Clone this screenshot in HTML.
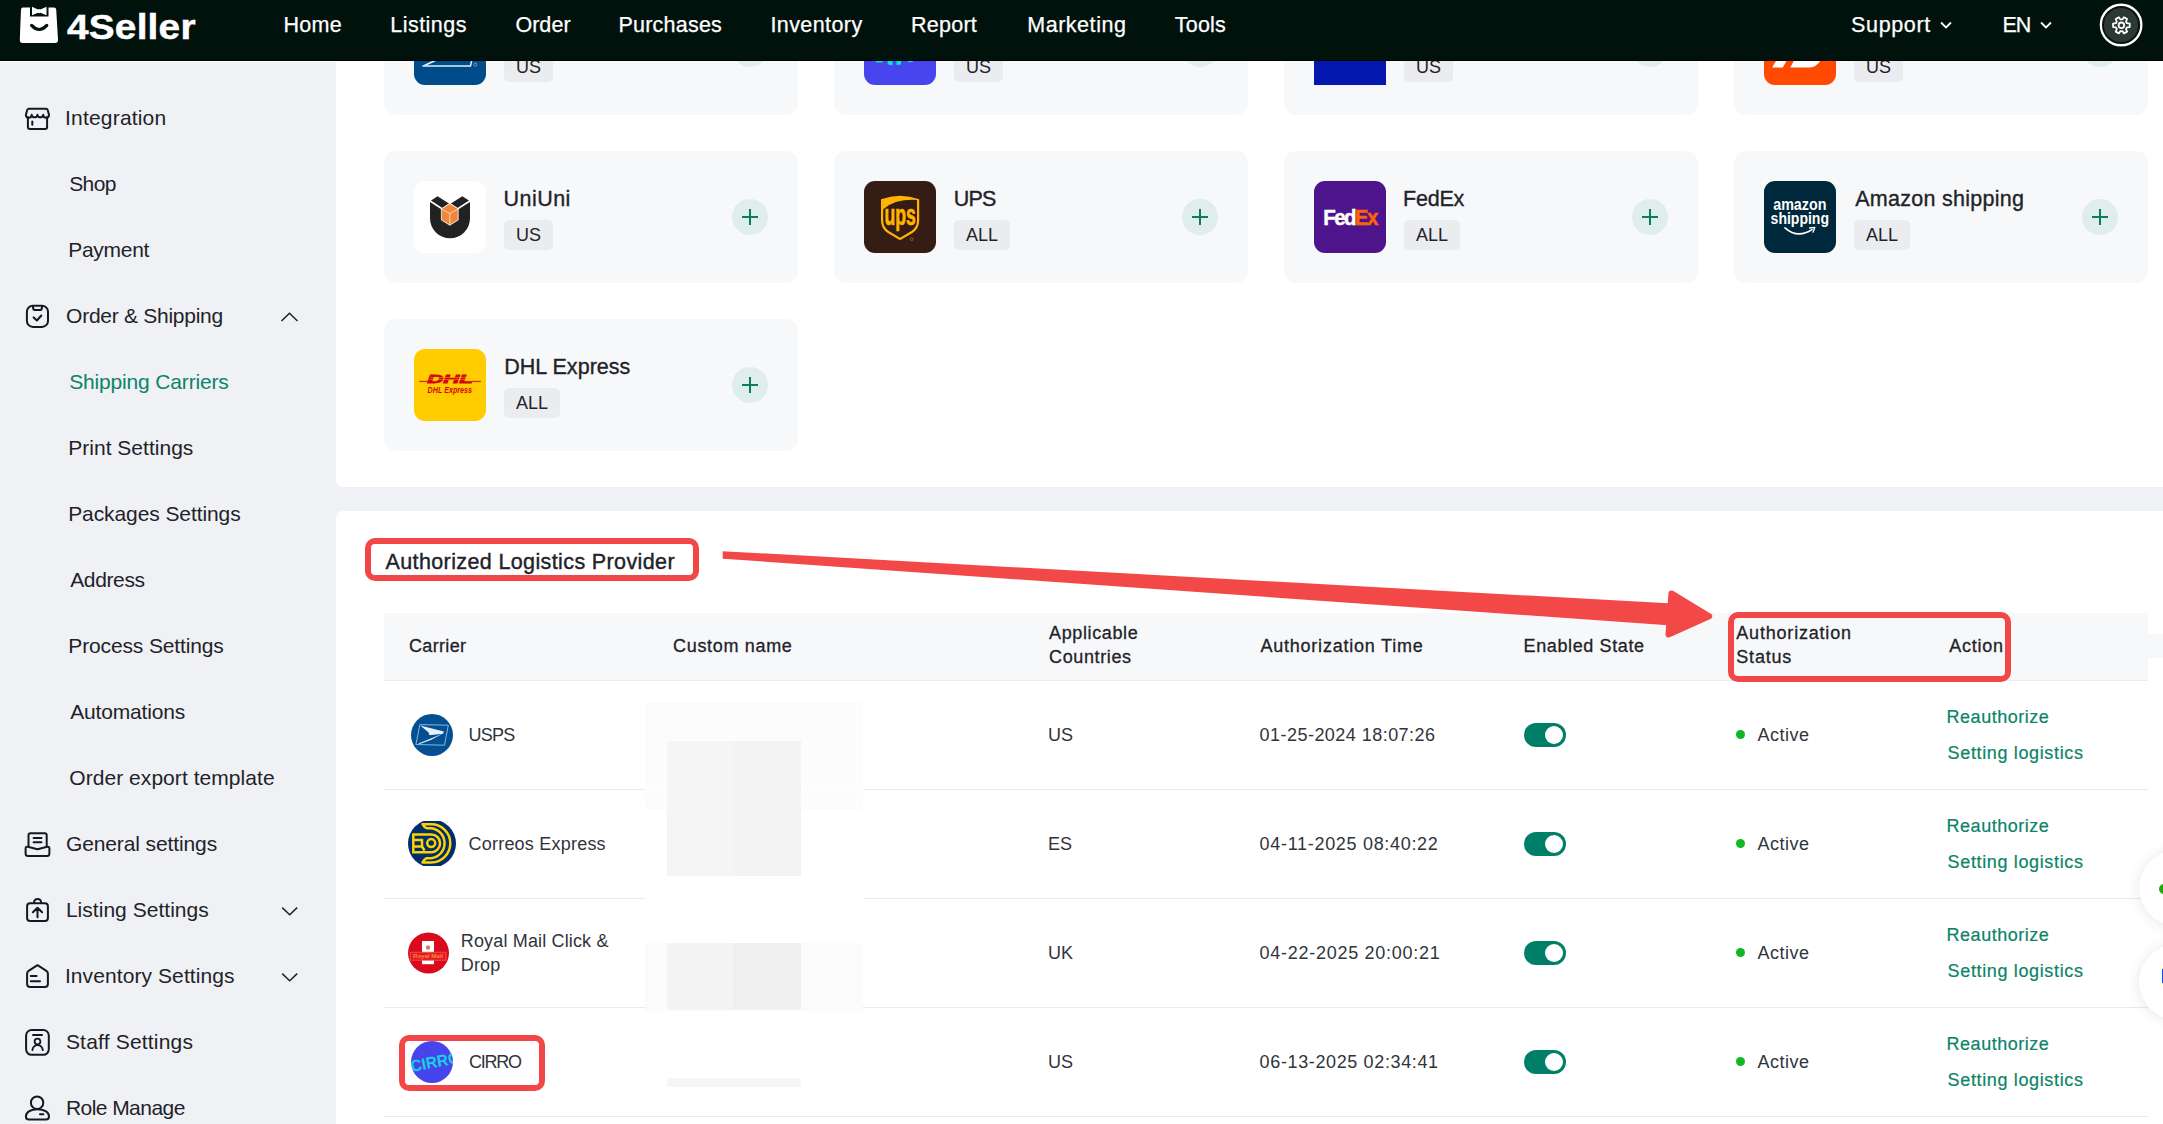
<!DOCTYPE html>
<html>
<head>
<meta charset="utf-8">
<style>
*{box-sizing:border-box;margin:0;padding:0}
html,body{width:2163px;height:1124px;overflow:hidden;background:#f0f1f5;font-family:"Liberation Sans",sans-serif;color:#1f2329}
.abs{position:absolute}
#topbar{position:absolute;left:0;top:0;width:2163px;height:61px;background:#01120d;z-index:20}
#topbar .nav{position:absolute;top:0.9px;height:49px;line-height:49px;color:#fff;font-size:21.5px;-webkit-text-stroke:0.25px #fff;white-space:nowrap}
#sidebar{position:absolute;left:0;top:61px;width:336px;height:1063px;background:#f0f1f5}
.sb{position:absolute;white-space:nowrap;font-size:21px;color:#1f2329;height:30px;line-height:30px}
.sb.sub{left:69px}
.sb.top{left:66px}
.sb.act{color:#0b8468}
.sbi{position:absolute;left:24px;width:28px;height:28px}
#panel1{position:absolute;left:336px;top:61px;width:1827px;height:426px;background:#fff;border-bottom-left-radius:7px}
#panel2{position:absolute;left:336px;top:511px;width:1827px;height:613px;background:#fff;border-top-left-radius:7px}
.card{position:absolute;width:414px;height:132px;background:#f7f8fa;border-radius:12px}
.card .logo{position:absolute;left:30px;top:30px;width:72px;height:72px;border-radius:11px;overflow:hidden}
.card .nm{position:absolute;left:120px;top:33px;font-size:21.5px;line-height:30px;color:#1f2329;white-space:nowrap;-webkit-text-stroke:0.35px #1f2329}
.card .bd{position:absolute;left:120px;top:69px;height:30px;line-height:30px;padding:0 12px;background:#ebecf0;border-radius:5px;font-size:18px;color:#1f2329;white-space:nowrap}
.card .plus{position:absolute;left:348px;top:48px;width:36px;height:36px;border-radius:50%;background:#e0eeeb}
.card .plus:before{content:"";position:absolute;left:10px;top:17px;width:16px;height:2px;background:#0a7c5f}
.card .plus:after{content:"";position:absolute;left:17px;top:10px;width:2px;height:16px;background:#0a7c5f}
#thead{position:absolute;left:384px;top:613px;width:1764px;height:68px;background:#f7f8fa;border-bottom:1px solid #e8eaf1}
.th{position:absolute;margin-top:-0.6px;font-size:18px;line-height:24px;color:#1f2329;white-space:nowrap;-webkit-text-stroke:0.3px #1f2329}
.row{position:absolute;left:384px;width:1764px;height:109px;border-bottom:1px solid #e8eaf1}
.td{position:absolute;font-size:18px;line-height:24px;color:#30343b;white-space:nowrap}
.lnk{position:absolute;left:1564px;font-size:18px;line-height:24px;color:#0b8468;white-space:nowrap;-webkit-text-stroke:0.2px #0b8468}
.tog{position:absolute;left:1140px;top:42px;width:42px;height:24px;border-radius:12px;background:#007f68}
.tog:after{content:"";position:absolute;left:21px;top:3px;width:18px;height:18px;border-radius:50%;background:#fff}
.dot{position:absolute;left:1352px;top:49px;width:9px;height:9px;border-radius:50%;background:#10b827}
.av{position:absolute;width:44px;height:44px;border-radius:50%;overflow:hidden}
.redbox{position:absolute;border:6px solid #f34747;border-radius:10px}
</style>
</head>
<body>
<div id="sidebar">
<div class="abs" style="left:0;top:0;width:336px;height:1px;background:#fff"></div>
<div class="sb top" style="top:42px;letter-spacing:0.18px;margin-left:-0.9px">Integration</div>
<div class="sb sub" style="top:108px;letter-spacing:-0.58px;margin-left:0.2px">Shop</div>
<div class="sb sub" style="top:174px;letter-spacing:-0.28px;margin-left:-0.8px">Payment</div>
<div class="sb top" style="top:240px;letter-spacing:-0.27px;margin-left:0.1px">Order &amp; Shipping</div>
<div class="sb sub act" style="top:306px;letter-spacing:-0.16px;margin-left:0.2px">Shipping Carriers</div>
<div class="sb sub" style="top:372px;letter-spacing:0.02px;margin-left:-0.8px">Print Settings</div>
<div class="sb sub" style="top:438px;letter-spacing:-0.09px;margin-left:-0.8px">Packages Settings</div>
<div class="sb sub" style="top:504px;letter-spacing:-0.36px;margin-left:1.2px">Address</div>
<div class="sb sub" style="top:570px;letter-spacing:-0.14px;margin-left:-0.7px">Process Settings</div>
<div class="sb sub" style="top:636px;letter-spacing:-0.19px;margin-left:1.3px">Automations</div>
<div class="sb sub" style="top:702px;letter-spacing:0.05px;margin-left:0.3px">Order export template</div>
<div class="sb top" style="top:768px;letter-spacing:-0.11px;margin-left:-0.1px">General settings</div>
<div class="sb top" style="top:834px;letter-spacing:0.03px;margin-left:-0.1px">Listing Settings</div>
<div class="sb top" style="top:900px;letter-spacing:0.09px;margin-left:-1.1px">Inventory Settings</div>
<div class="sb top" style="top:966px;letter-spacing:0.19px;margin-left:-0.1px">Staff Settings</div>
<div class="sb top" style="top:1032px;letter-spacing:-0.55px;margin-left:-0.1px">Role Manage</div>
<svg class="abs" style="left:0;top:-61px" width="336" height="1124" viewBox="0 0 336 1124" fill="none" stroke="#141820" stroke-width="2" stroke-linecap="round" stroke-linejoin="round">
<!-- integration -->
<path d="M28.8 108.7 H46.2 Q47.3 108.7 47.6 109.8 L49 114.8 A2.9 2.9 0 0 1 43.2 114.8 A2.9 2.9 0 0 1 37.45 114.8 A2.9 2.9 0 0 1 31.7 114.8 A2.9 2.9 0 0 1 25.9 114.8 L27.3 109.8 Q27.6 108.7 28.8 108.7 Z"/>
<path d="M27.9 117.2 V126.9 Q27.9 128.9 29.9 128.9 H45.1 Q47.1 128.9 47.1 126.9 V117.2"/>
<path d="M32.3 121.6 V124.7"/>
<!-- order & shipping -->
<rect x="26.9" y="305.8" width="21.1" height="21.1" rx="6"/>
<path d="M33 306 V307.4 Q33 310.1 35.7 310.1 H39.3 Q42 310.1 42 307.4 V306"/>
<path d="M33.6 317.4 L36.9 320.5 L41.3 315.5"/>
<!-- general settings -->
<path d="M28.5 846.2 V835.2 Q28.5 833.2 30.5 833.2 H44.7 Q46.7 833.2 46.7 835.2 V846.2"/>
<path d="M33.6 837.9 H41.5 M33.6 842.3 H41.5"/>
<path d="M25.6 848.6 Q25.6 846.3 27.8 846.8 L37.5 849.2 L47.2 846.8 Q49.4 846.3 49.4 848.6 V853.4 Q49.4 855.9 46.9 855.9 H28.1 Q25.6 855.9 25.6 853.4 Z"/>
<!-- listing settings -->
<rect x="27.1" y="903.2" width="20.8" height="17.8" rx="3"/>
<path d="M34 903 V902.5 A3.6 3.6 0 0 1 41.2 902.5 V903"/>
<path d="M37.5 917.2 V908 M32.9 912.2 L37.5 907.7 L42.1 912.2"/>
<!-- inventory settings -->
<path d="M37.5 965.2 L46.4 970.9 Q47.9 971.9 47.9 973.7 V984.1 Q47.9 987.1 44.9 987.1 H30.1 Q27.1 987.1 27.1 984.1 V973.7 Q27.1 971.9 28.6 970.9 Z"/>
<path d="M30.8 976 H36.6 M30.8 981.3 H40"/>
<!-- staff settings -->
<rect x="26.1" y="1030" width="22.7" height="24.8" rx="5.5"/>
<path d="M33 1034.9 H42" />
<circle cx="37.5" cy="1041.6" r="2.9" stroke-width="1.8"/>
<path d="M32.4 1050.2 A5.2 5.2 0 0 1 42.8 1050.2" stroke-width="1.8"/>
<!-- role manage -->
<circle cx="37.1" cy="1102.7" r="6.2"/>
<path d="M25.9 1116.4 C25.9 1112 31 1109.2 37.4 1109.2 C43.9 1109.2 49 1112 49 1116.4 Q49 1119.4 46 1119.4 H28.9 Q25.9 1119.4 25.9 1116.4 Z"/>
<path d="M40 1114.3 H43.4"/>
<!-- chevrons -->
<g stroke-width="1.5" stroke="#1f2329" stroke-linecap="butt" stroke-linejoin="miter">
<path d="M281.5 321 L289.5 313.3 L297.5 321"/>
<path d="M282.2 907.6 L289.7 914.8 L297.2 907.6"/>
<path d="M282.2 973.6 L289.7 980.8 L297.2 973.6"/>
</g>
</svg>
</div>
<div id="panel1"></div>
<div id="panel2"></div>
<!--CARDS-->
<div class="card" style="left:384px;top:-17px"><div class="logo" id="lg-usps1"><svg width="72" height="72" viewBox="0 0 72 72"><rect width="72" height="72" fill="#004b8a"/>
<path d="M8.4 53 L56.5 53 L58 46" fill="none" stroke="#dff0f7" stroke-width="1.5"/><path d="M8.6 52.6 L24.5 45 L28.5 45 L12.5 52.6 Z" fill="#e9f5fa"/>
<circle cx="61.4" cy="51.5" r="1.6" fill="none" stroke="#cfe3ee" stroke-width="0.5"/>
</svg></div><div class="nm"></div><div class="bd">US</div><div class="plus"></div></div>
<div class="card" style="left:834px;top:-17px"><div class="logo" id="lg-cirro1"><svg width="72" height="72" viewBox="0 0 72 72"><rect width="72" height="72" fill="#4845ee"/>
<path d="M11.5 48 h7.5 v1 q-3.7 1.2 -7.5 0 Z M23.7 48 h4.8 v4.2 l-4.8 -0.6 Z M32.5 48 h4.6 v3.6 l-4.6 0.5 Z M43.6 48 h5.4 v0.8 q-2.7 0.8 -5.4 0 Z" fill="#00e8c8"/>
</svg></div><div class="nm"></div><div class="bd">US</div><div class="plus"></div></div>
<div class="card" style="left:1284px;top:-17px"><div class="logo" id="lg-blue1" style="border-radius:0"><svg width="72" height="72" viewBox="0 0 72 72"><rect width="72" height="72" fill="#0418b0"/></svg></div><div class="nm"></div><div class="bd">US</div><div class="plus"></div></div>
<div class="card" style="left:1734px;top:-17px"><div class="logo" id="lg-orange1"><svg width="72" height="72" viewBox="0 0 72 72"><rect width="72" height="72" fill="#ff4a00"/>
<path d="M8.2 54.5 L18.8 54.5 L23 47 L12.5 47 Z" fill="#fff"/>
<path d="M26.2 54.5 L46 54.5 Q52 54.5 57 47 L30.4 47 Z" fill="#fff"/>
</svg></div><div class="nm"></div><div class="bd">US</div><div class="plus"></div></div>
<div class="card" style="left:384px;top:151px"><div class="logo" id="lg-uniuni"><svg width="72" height="72" viewBox="0 0 72 72"><rect width="72" height="72" fill="#fff"/>
<path d="M16 21 L16 37.3 A20 20 0 0 0 56 37.3 L56 21 L44 28.5 L35.8 33 L27.6 28.5 Z" fill="#222"/>
<path d="M17 19.5 L23.6 15.2 L35 22.6 L28.4 27 Z" fill="#222"/>
<path d="M55 19.5 L48.3 15.2 L36.9 22.6 L43.4 27 Z" fill="#222"/>
<path d="M35.8 22.6 L44.2 27.8 L44.2 39 L35.8 44.2 L27.4 39 L27.4 27.8 Z" fill="#f0883c" stroke="#fff" stroke-width="0.8" stroke-linejoin="round"/>
<path d="M27.4 27.8 L35.8 32.6 L44.2 27.8 M35.8 32.6 V44.2" fill="none" stroke="#fbe3cf" stroke-width="0.8"/>
</svg></div><div class="nm" style="letter-spacing:0.46px;margin-left:-0.5px">UniUni</div><div class="bd">US</div><div class="plus"></div></div>
<div class="card" style="left:834px;top:151px"><div class="logo" id="lg-ups"><svg width="72" height="72" viewBox="0 0 72 72"><rect width="72" height="72" fill="#351c15"/>
<path d="M17 18.3 Q36 11 55.2 18.3 L55.2 39.5 Q55.2 47.5 48.5 52 L36.1 59.3 L23.7 52 Q17 47.5 17 39.5 Z" fill="#ffb500"/>
<path d="M19.2 28.2 Q31 17.8 53 18.9 L53 39.5 Q53 46.2 47.4 50 L36.1 56.7 L24.8 50 Q19.2 46.2 19.2 39.5 Z" fill="#351c15"/>
<text x="20.4" y="44.3" font-family="Liberation Sans, sans-serif" font-weight="bold" font-size="30" fill="#ffb500" stroke="#ffb500" stroke-width="0.7" textLength="31.4" lengthAdjust="spacingAndGlyphs">ups</text>
<circle cx="47.7" cy="58.2" r="1.4" fill="none" stroke="#c98a10" stroke-width="0.6"/>
</svg></div><div class="nm" style="letter-spacing:-0.9px;margin-left:-0.2px">UPS</div><div class="bd">ALL</div><div class="plus"></div></div>
<div class="card" style="left:1284px;top:151px"><div class="logo" id="lg-fedex"><svg width="72" height="72" viewBox="0 0 72 72"><rect width="72" height="72" fill="#4d148c"/>
<text transform="translate(9.3,43.9) scale(0.9,1)" font-family="Liberation Sans, sans-serif" font-weight="bold" font-size="22.8" fill="#fff" textLength="36.9" lengthAdjust="spacing" stroke="#fff" stroke-width="0.5">Fed</text>
<text transform="translate(40.7,43.9) scale(0.9,1)" font-family="Liberation Sans, sans-serif" font-weight="bold" font-size="22.8" fill="#ff6200" textLength="26.4" lengthAdjust="spacing" stroke="#ff6200" stroke-width="0.5">Ex</text>
</svg></div><div class="nm" style="letter-spacing:-0.25px;margin-left:-0.9px">FedEx</div><div class="bd">ALL</div><div class="plus"></div></div>
<div class="card" style="left:1734px;top:151px"><div class="logo" id="lg-amazon"><svg width="72" height="72" viewBox="0 0 72 72"><rect width="72" height="72" fill="#00283c"/>
<text x="9.2" y="28.5" font-family="Liberation Sans, sans-serif" font-weight="bold" font-size="17.2" fill="#fff" textLength="53.2" lengthAdjust="spacingAndGlyphs">amazon</text>
<text x="6.6" y="43.2" font-family="Liberation Sans, sans-serif" font-weight="bold" font-size="17.2" fill="#fff" textLength="58.4" lengthAdjust="spacingAndGlyphs">shipping</text>
<path d="M21 46.8 Q33.5 58 48 48.6" fill="none" stroke="#fff" stroke-width="1.7" stroke-linecap="round"/>
<path d="M45.6 47 L50.8 46.4 L49 51.2" fill="none" stroke="#fff" stroke-width="1.3" stroke-linecap="round" stroke-linejoin="round"/>
</svg></div><div class="nm" style="letter-spacing:0.28px;margin-left:1.2px">Amazon shipping</div><div class="bd">ALL</div><div class="plus"></div></div>
<div class="card" style="left:384px;top:319px"><div class="logo" id="lg-dhl"><svg width="72" height="72" viewBox="0 0 72 72"><rect width="72" height="72" fill="#ffcc00"/>
<text x="13.2" y="33.8" font-family="Liberation Sans, sans-serif" font-weight="bold" font-style="italic" font-size="11.6" fill="#d40511" stroke="#d40511" stroke-width="0.8" textLength="45.5" lengthAdjust="spacingAndGlyphs">DHL</text>
<rect x="5.2" y="31.8" width="9.5" height="1.3" fill="#d8330c"/><rect x="57.6" y="31.8" width="9.4" height="1.3" fill="#d8330c"/>
<rect x="16" y="28" width="40" height="0.6" fill="#ffcc00" opacity=".7"/><rect x="15" y="30.3" width="42" height="0.6" fill="#ffcc00" opacity=".7"/>
<text x="13.6" y="44.4" font-family="Liberation Sans, sans-serif" font-weight="bold" font-style="italic" font-size="8.6" fill="#d40511" textLength="44.4" lengthAdjust="spacingAndGlyphs">DHL Express</text>
</svg></div><div class="nm" style="letter-spacing:0.03px;margin-left:0.2px">DHL Express</div><div class="bd">ALL</div><div class="plus"></div></div>
<!--TABLE-->
<div id="thead"><div class="th" style="left:24px;top:22px;letter-spacing:0.37px;margin-left:0.9px">Carrier</div><div class="th" style="left:289px;top:22px;letter-spacing:0.67px;margin-left:0.1px">Custom name</div><div class="th" style="left:664px;top:9px;letter-spacing:0.63px;margin-left:1px">Applicable<br>Countries</div><div class="th" style="left:876px;top:22px;letter-spacing:0.78px;margin-left:0.4px">Authorization Time</div><div class="th" style="left:1140px;top:22px;letter-spacing:0.62px;margin-left:-0.5px">Enabled State</div><div class="th" style="left:1352px;top:9px;letter-spacing:0.8px;margin-left:0.3px">Authorization<br>Status</div><div class="th" style="left:1564px;top:22px;letter-spacing:0.78px;margin-left:1.2px">Action</div></div>
<div class="row" style="top:681px"><svg class="abs" style="left:27px;top:33px" width="42" height="42" viewBox="0 0 42 42"><circle cx="21" cy="21" r="21" fill="#044e92"/>
<path d="M8.9 10.6 L37.3 11.2 L33.5 31.2 L4.9 30.5 Z" fill="none" stroke="#8fc4ea" stroke-width="0.9"/>
<path d="M9.2 11.4 L32.8 17.6 L32.2 19.8 L18.6 21.2 L17.4 18.2 Z" fill="#e6f1f8"/>
<path d="M32.6 19.2 L7.3 29.6 L8.2 30.3 L20 26 Z" fill="#d2e6f4"/>
</svg><div class="td" style="left:84px;top:42px;letter-spacing:-0.75px;margin-left:0.4px">USPS</div><div class="td" style="left:664px;top:42px">US</div><div class="td" style="left:876px;top:42px;letter-spacing:0.46px;margin-left:-0.4px">01-25-2024 18:07:26</div><div class="tog"></div><div class="dot"></div><div class="td" style="left:1373px;top:42px;letter-spacing:0.5px;margin-left:0.5px">Active</div><div class="lnk" style="top:24px;letter-spacing:0.5px;margin-left:-1.4px">Reauthorize</div><div class="lnk" style="top:60px;letter-spacing:0.64px;margin-left:-0.4px">Setting logistics</div></div>
<div class="row" style="top:790px"><svg class="abs" style="left:24px;top:31px" width="48" height="45" viewBox="0 1.5 48 45"><circle cx="24" cy="24" r="24" fill="#002e6d"/>
<g fill="none" stroke="#ffd100" stroke-width="2.5">
<circle cx="23.2" cy="23.6" r="4"/>
<path d="M5.3 14.9 H23.2 A8.9 8.9 0 0 1 23.2 32.7 H5.3 Z"/>
<path d="M5.3 20.5 H14 V27 H5.3"/>
<path d="M14 27 L16.5 31"/>
<path d="M14.6 4.7 H23.2 A19.1 19.1 0 0 1 23.2 42.9 H14.6 Q16 40 18.6 38.7 H23.2 A15.1 15.1 0 0 0 23.2 8.7 H18.6 Q16 7.6 14.6 4.7 Z" stroke-linejoin="round"/>
</g></svg><div class="td" style="left:84px;top:42px;letter-spacing:0.22px;margin-left:0.5px">Correos Express</div><div class="td" style="left:664px;top:42px">ES</div><div class="td" style="left:876px;top:42px;letter-spacing:0.69px;margin-left:-0.4px">04-11-2025 08:40:22</div><div class="tog"></div><div class="dot"></div><div class="td" style="left:1373px;top:42px;letter-spacing:0.5px;margin-left:0.5px">Active</div><div class="lnk" style="top:24px;letter-spacing:0.5px;margin-left:-1.4px">Reauthorize</div><div class="lnk" style="top:60px;letter-spacing:0.64px;margin-left:-0.4px">Setting logistics</div></div>
<div class="row" style="top:899px"><svg class="abs" style="left:24px;top:33px" width="42" height="42" viewBox="0 0 42 42"><circle cx="20.5" cy="21" r="20.5" fill="#da0a1e"/>
<rect x="14" y="9" width="12" height="23.2" fill="#fff"/>
<circle cx="20" cy="15.6" r="2.3" fill="#d89a63"/><rect x="18.6" y="14.4" width="2.8" height="2.2" fill="#a9836a"/>
<rect x="2.2" y="20.2" width="35.8" height="8" fill="#e21b23" stroke="#f5574c" stroke-width="0.8"/>
<text x="5" y="26.4" font-family="Liberation Sans, sans-serif" font-weight="bold" font-size="5.6" fill="#f68a3c" textLength="30" lengthAdjust="spacingAndGlyphs">Royal Mail</text>
</svg><div class="td" style="left:77px;top:30px;letter-spacing:0.15px;margin-left:-0.2px">Royal Mail Click &amp;<br>Drop</div><div class="td" style="left:664px;top:42px">UK</div><div class="td" style="left:876px;top:42px;letter-spacing:0.72px;margin-left:-0.4px">04-22-2025 20:00:21</div><div class="tog"></div><div class="dot"></div><div class="td" style="left:1373px;top:42px;letter-spacing:0.5px;margin-left:0.5px">Active</div><div class="lnk" style="top:24px;letter-spacing:0.5px;margin-left:-1.4px">Reauthorize</div><div class="lnk" style="top:60px;letter-spacing:0.64px;margin-left:-0.4px">Setting logistics</div></div>
<div class="row" style="top:1008px"><svg class="abs" style="left:27px;top:33px" width="42" height="42" viewBox="0 0 42 42"><defs><clipPath id="cc"><circle cx="21" cy="21" r="21"/></clipPath></defs><circle cx="21" cy="21" r="21" fill="#4744ee"/>
<g clip-path="url(#cc)"><text x="-0.8" y="27" font-family="Liberation Sans, sans-serif" font-weight="bold" font-size="16.2" fill="#18d2e2" transform="rotate(-11 21 21)" textLength="50" lengthAdjust="spacingAndGlyphs">CIRRO</text></g>
</svg><div class="td" style="left:84px;top:42px;letter-spacing:-1.26px;margin-left:1.0px">CIRRO</div><div class="td" style="left:664px;top:42px">US</div><div class="td" style="left:876px;top:42px;letter-spacing:0.63px;margin-left:-0.4px">06-13-2025 02:34:41</div><div class="tog"></div><div class="dot"></div><div class="td" style="left:1373px;top:42px;letter-spacing:0.5px;margin-left:0.5px">Active</div><div class="lnk" style="top:24px;letter-spacing:0.5px;margin-left:-1.4px">Reauthorize</div><div class="lnk" style="top:60px;letter-spacing:0.64px;margin-left:-0.4px">Setting logistics</div></div>
<div class="abs" style="left:645px;top:702px;width:218px;height:108px;background:#fcfcfc"></div>
<div class="abs" style="left:645px;top:786px;width:218px;height:7px;background:#fdfdfd"></div>
<div class="abs" style="left:645px;top:894px;width:218px;height:8px;background:#fff"></div>
<div class="abs" style="left:645px;top:943px;width:218px;height:68px;background:#fbfbfb"></div>
<div class="abs" style="left:667px;top:741px;width:134px;height:135px;background:#f5f5f5"></div>
<div class="abs" style="left:733px;top:741px;width:68px;height:135px;background:#f3f3f3"></div>
<div class="abs" style="left:667px;top:943px;width:134px;height:67px;background:#f4f4f4"></div>
<div class="abs" style="left:733px;top:943px;width:68px;height:67px;background:#f0f0f0"></div>
<div class="abs" style="left:667px;top:1078px;width:134px;height:9px;background:#f6f6f6"></div>
<div class="abs" id="ttl" style="left:384px;top:547.3px;font-size:21.5px;line-height:30px;white-space:nowrap;color:#1f2329;-webkit-text-stroke:0.4px #1f2329;letter-spacing:0.38px;margin-left:1.5px">Authorized Logistics Provider</div>
<div class="redbox" style="left:365px;top:538px;width:334px;height:43px"></div>
<div class="redbox" style="left:1728px;top:612px;width:283px;height:70px"></div>
<div class="redbox" style="left:399px;top:1035px;width:146px;height:56px"></div>
<svg class="abs" style="left:700px;top:540px" width="1030" height="110" viewBox="700 540 1030 110"><path d="M722.7 551.2 L1668 603.2 L1668 625.2 L722.7 558.7 Z" fill="#f24848"/><path d="M1671.4 593.4 L1709.2 616.3 L1668.5 634.5 Z" fill="#f24848" stroke="#f24848" stroke-width="6" stroke-linejoin="round"/></svg>
<div class="abs" style="left:2148px;top:634px;width:15px;height:24px;background:#f7f8fa"></div>
<div class="abs" style="left:2100px;top:800px;width:63px;height:260px;overflow:hidden">
<div class="abs" style="left:39px;top:50px;width:76px;height:76px;border-radius:50%;background:#fff;box-shadow:0 1px 14px rgba(20,20,50,.10)"></div>
<div class="abs" style="left:59px;top:84px;width:10px;height:10px;border-radius:50%;background:#22a80c"></div>
<div class="abs" style="left:39px;top:144px;width:76px;height:76px;border-radius:50%;background:#fff;box-shadow:0 1px 14px rgba(20,20,50,.10)"></div>
<div class="abs" style="left:62px;top:169px;width:4px;height:14px;background:#1549f0"></div>
</div>

<div id="topbar">
<div class="abs" style="left:0;top:60px;width:2163px;height:1px;background:#000"></div>
<svg class="abs" style="left:19px;top:6px" width="40" height="38" viewBox="0 0 40 38">
<path d="M4 1.5 H35 Q37 1.5 37.2 3.5 L39 33.5 Q39.2 37 35.8 37 H3.8 Q0.6 37 0.8 33.5 L2 3.5 Q2.2 1.5 4 1.5 Z" fill="#fff"/>
<rect x="11" y="0" width="18.5" height="10.5" fill="#01120d"/>
<path d="M13 0.8 L19 3.4 Q20.2 2.6 21.4 3.4 L27.5 0.8 V9.2 L21.4 6.8 Q20.2 7.6 19 6.8 L13 9.2 Z" fill="#fff"/>
<path d="M12.6 19.4 Q20.2 27.6 27.8 19.4" fill="none" stroke="#01120d" stroke-width="3.2" stroke-linecap="round"/>
</svg>
<div class="abs" id="brand" style="left:66.5px;top:3.5px;height:46px;line-height:46px;color:#fff;font-weight:bold;font-size:35.5px;letter-spacing:0.2px;white-space:nowrap;transform-origin:0 50%;transform:scaleX(1.092);-webkit-text-stroke:0.5px #fff">4Seller</div>
<div class="nav" style="left:284px;letter-spacing:0.26px;margin-left:-0.5px">Home</div>
<div class="nav" style="left:390px;letter-spacing:0.49px;margin-left:0.2px">Listings</div>
<div class="nav" style="left:515px;letter-spacing:0.05px;margin-left:0.4px">Order</div>
<div class="nav" style="left:619px;letter-spacing:0.22px;margin-left:-0.5px">Purchases</div>
<div class="nav" style="left:770px;letter-spacing:0.42px;margin-left:0.4px">Inventory</div>
<div class="nav" style="left:911px;letter-spacing:0.24px;margin-left:0.1px">Report</div>
<div class="nav" style="left:1027px;letter-spacing:0.54px;margin-left:0.2px">Marketing</div>
<div class="nav" style="left:1174px;letter-spacing:0.19px;margin-left:0.8px">Tools</div>
<div class="nav" style="left:1850px;letter-spacing:0.63px;margin-left:1.1px">Support</div>
<svg class="abs" style="left:1939.2px;top:19.4px" width="14" height="12" viewBox="0 0 14 12"><path d="M2 3.5 L7 8.5 L12 3.5" fill="none" stroke="#fff" stroke-width="1.8"/></svg>
<div class="nav" style="left:2002px;letter-spacing:-1.2px;margin-left:0.6px">EN</div>
<svg class="abs" style="left:2039px;top:19.4px" width="14" height="12" viewBox="0 0 14 12"><path d="M2 3.5 L7 8.5 L12 3.5" fill="none" stroke="#fff" stroke-width="1.8"/></svg>
<svg class="abs" style="left:2095px;top:0" width="52" height="50" viewBox="2095 0 52 50"><circle cx="2121.1" cy="25" r="20.25" fill="#0b120f" stroke="#fff" stroke-width="2.3"/></svg>
<div class="abs" style="left:2104.3px;top:8.2px;width:33.6px;height:33.6px;border-radius:50%;background:#2a3936"></div>
<svg class="abs" style="left:0;top:0" width="2163" height="60" viewBox="0 0 2163 60" fill="none" stroke="#fff" stroke-width="1.8" stroke-linejoin="round"><path d="M2126.91 23.19 L2129.71 23.53 L2129.71 27.07 L2126.91 27.41 L2125.99 29.01 L2127.09 31.62 L2124.03 33.38 L2122.32 31.13 L2120.48 31.13 L2118.77 33.38 L2115.71 31.62 L2116.81 29.01 L2115.89 27.41 L2113.09 27.07 L2113.09 23.53 L2115.89 23.19 L2116.81 21.59 L2115.71 18.98 L2118.77 17.22 L2120.48 19.47 L2122.32 19.47 L2124.03 17.22 L2127.09 18.98 L2125.99 21.59 Z"/><circle cx="2121.4" cy="25.3" r="2.8"/></svg>
</div>
</body>
</html>
